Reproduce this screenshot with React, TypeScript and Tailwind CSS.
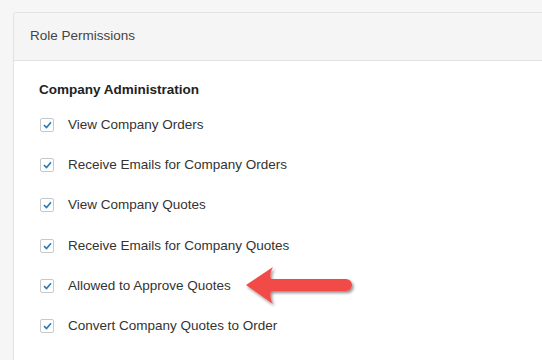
const permissions = [
  "View Company Orders",
  "Receive Emails for Company Orders",
  "View Company Quotes",
  "Receive Emails for Company Quotes",
  "Allowed to Approve Quotes",
  "Convert Company Quotes to Order",
];

function Check() {
  return (
    <span className="flex h-[14px] w-[14px] shrink-0 items-center justify-center rounded-[2px] border border-[#c8c8c8] bg-white">
      <svg width="9" height="8" viewBox="0 0 9 8">
        <path d="M1 4.2 L3.5 6.5 L8 1.2" fill="none" stroke="#2779b5" strokeWidth="1.6" />
      </svg>
    </span>
  );
}

export default function App() {
  return (
    <div
      className="relative h-[360px] w-[542px] overflow-hidden bg-[#f6f6f6] pl-[13px] pt-[12px] text-[#333]"
      style={{ fontFamily: '"Liberation Sans", Arial, sans-serif' }}
    >
      <div className="h-full rounded-tl-[3px] border-l border-t border-[#e2e2e2] bg-white">
        <div className="flex h-[48px] items-center border-b border-[#e2e2e2] bg-[#f5f5f5] px-[16px] text-[13.5px] text-[#444]">
          Role Permissions
        </div>
        <div className="pl-[25px] pt-[20px]">
          <h3 className="text-[13.5px] font-bold leading-[18px] text-[#222]">Company Administration</h3>
          <ul className="mt-[6px]">
            {permissions.map((p) => (
              <li key={p} className="flex h-[40.2px] items-center gap-[14px] pl-px text-[13.5px]">
                <Check />
                <span>{p}</span>
              </li>
            ))}
          </ul>
        </div>
      </div>

      <svg className="absolute left-[240px] top-[262px]" width="120" height="50" viewBox="0 0 120 50">
        <defs>
          <filter id="sh" x="-20%" y="-30%" width="140%" height="170%">
            <feDropShadow dx="1.5" dy="2" stdDeviation="1.5" floodColor="#000" floodOpacity="0.45" />
          </filter>
        </defs>
        <path
          d="M6 23 L33 5 Q29 12 31 17 L106 17 A6 6 0 0 1 106 29 L31 29 Q29 35 33 42 Z"
          fill="#f24c46"
          filter="url(#sh)"
        />
      </svg>
    </div>
  );
}
